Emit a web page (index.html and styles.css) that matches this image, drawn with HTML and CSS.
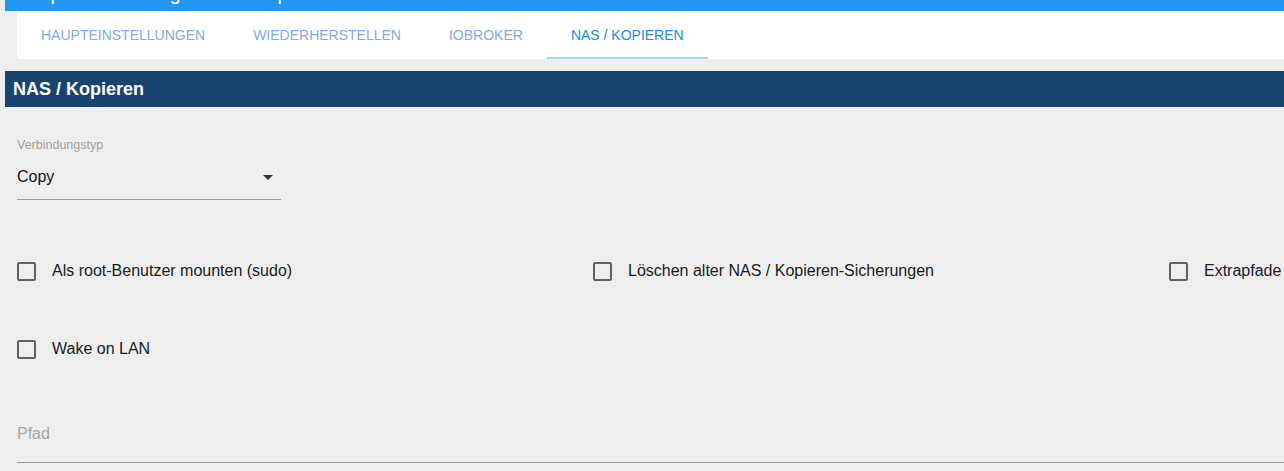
FILE: index.html
```html
<!DOCTYPE html>
<html lang="de">
<head>
    <meta charset="UTF-8">
    <meta name="viewport" content="width=device-width, initial-scale=1.0">
    <title>NAS / Kopieren</title>
    <link rel="stylesheet" href="styles.css">
</head>
<body>
    <div class="appbar">
        <span class="appbar-title">Adaptereinstellungen: backitup.0</span>
    </div>

    <div class="tabs">
        <div class="tab">HAUPTEINSTELLUNGEN</div>
        <div class="tab">WIEDERHERSTELLEN</div>
        <div class="tab">IOBROKER</div>
        <div class="tab active">NAS / KOPIEREN</div>
    </div>

    <div class="section-head">NAS / Kopieren</div>

    <div class="content">
        <div class="select-field">
            <label class="field-label">Verbindungstyp</label>
            <div class="select-value">
                <span>Copy</span>
                <span class="select-arrow"></span>
            </div>
        </div>

        <div class="checks">
            <label class="check"><span class="box"></span>Als root-Benutzer mounten (sudo)</label>
            <label class="check"><span class="box"></span>Löschen alter NAS / Kopieren-Sicherungen</label>
            <label class="check"><span class="box"></span>Extrapfade</label>
            <label class="check"><span class="box"></span>Wake on LAN</label>
        </div>

        <div class="text-field">
            <span class="placeholder">Pfad</span>
        </div>
    </div>
</body>
</html>
```

FILE: styles.css
```css
body {
    font-family: "Liberation Sans", Arial, sans-serif;
    background-color: #eeeeee;
    margin: 0;
    overflow: hidden;
    width: 1284px;
    height: 471px;
}
.appbar {
    margin-left: 5px;
    height: 11px;
    background-color: #2196f3;
    overflow: hidden;
}
.appbar-title {
    display: block;
    color: #fff;
    font-size: 20px;
    line-height: 20px;
    margin-top: -17px;
    padding-left: 10px;
    white-space: nowrap;
}
.tabs {
    display: flex;
    margin-left: 17px;
    height: 48px;
    background-color: #fff;
}
.tab {
    display: flex;
    align-items: center;
    padding: 0 24px;
    font-size: 14px;
    color: #7fa8ef;
    white-space: nowrap;
}
.tab.active {
    color: #2189ec;
    box-shadow: inset 0 -2px 0 #a6d4fa;
}
.section-head {
    display: flex;
    align-items: center;
    margin-top: 12px;
    margin-left: 5px;
    height: 36px;
    padding-left: 8px;
    background-color: #19446f;
    color: #fff;
    font-size: 18px;
    font-weight: bold;
}
.content {
    padding-left: 17px;
}
.select-field {
    width: 264px;
    margin-top: 31px;
    border-bottom: 1px solid #9a9a9a;
}
.field-label {
    display: block;
    font-size: 12.5px;
    line-height: 14px;
    color: #9e9e9e;
}
.select-value {
    display: flex;
    justify-content: space-between;
    align-items: center;
    margin-top: 13px;
    padding-bottom: 10px;
    font-size: 16px;
    line-height: 24px;
    color: #111;
}
.select-arrow {
    width: 0;
    height: 0;
    margin-right: 8px;
    border-left: 5px solid transparent;
    border-right: 5px solid transparent;
    border-top: 5px solid #333;
}
.checks {
    display: grid;
    grid-template-columns: repeat(3, 576px);
    row-gap: 38px;
    margin-top: 51px;
}
.check {
    display: flex;
    align-items: center;
    height: 40px;
    font-size: 16px;
    color: #1a1a1a;
    white-space: nowrap;
}
.box {
    width: 15px;
    height: 15px;
    border: 2px solid #616161;
    border-radius: 2px;
    margin-right: 16px;
}
.text-field {
    width: 1300px;
    margin-top: 55px;
    padding-bottom: 18px;
    border-bottom: 1px solid #9a9a9a;
}
.placeholder {
    display: block;
    font-size: 16px;
    line-height: 20px;
    color: #a4a4a4;
}
```
